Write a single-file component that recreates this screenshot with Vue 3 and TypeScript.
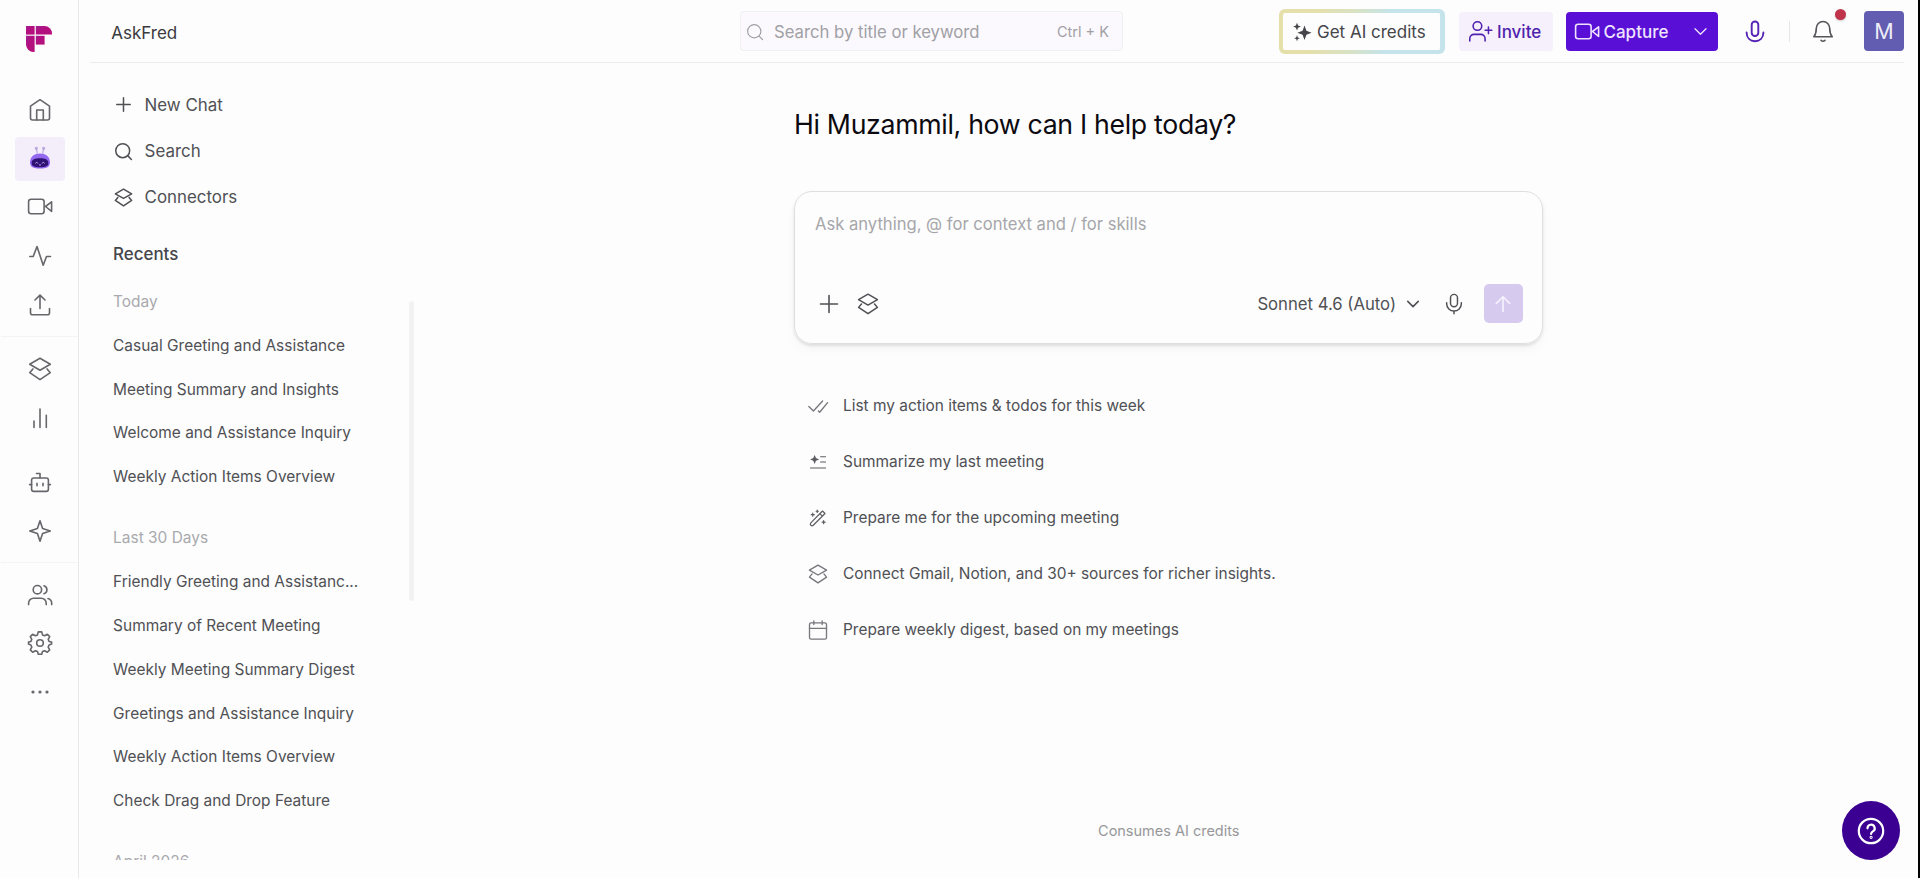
<script setup lang="ts">
const layers =
  '<path d="M12 1.3 22.3 7.3 12 13.2 1.7 7.3Z"/><path d="M4.9 11.9 1.7 15.7 12 22.6 22.3 15.7 19.1 11.9"/>'

const icons: Record<string, string> = {
  home: '<path d="M2.5 8.2 12 1.7l9.500 6.500V20a2 2 0 0 1-2 2h-15a2 2 0 0 1-2-2Z"/><path d="M8.700 22v-10h6.600v10"/>',
  video: '<rect x="0.600" y="4.200" width="15.500" height="14.600" rx="2.500"/><path d="M17.500 11.500 23.600 6.800v9.600Z"/>',
  activity: '<path d="M1.800 12.500h3.400L9 2.600l6.200 18.600 3.300-8.700h4"/>',
  upload: '<path d="M2.500 15.500v4.300a2 2 0 0 0 2 2h15a2 2 0 0 0 2-2v-4.300"/><path d="M12 15.500V2.500M7 7l5-4.800L17 7"/>',
  layers,
  bars: '<path d="M6 15v6.500M12 3v18.500M18.300 9.200v12.300"/>',
  bot: '<rect x="3.600" y="8" width="16.800" height="13.400" rx="2.200"/><path d="M12 8V3.500H8.500M1.600 14.600h2M20.400 14.600h2M9 13.400v2.400M15 13.400v2.400"/>',
  sparkle: '<path d="M12 1.800 14.600 9.400 22.300 12 14.600 14.600 12 22.300 9.400 14.600 1.800 12 9.400 9.400Z"/>',
  users: '<circle cx="9.400" cy="6.700" r="4.200"/><path d="M.6 21.600v-1.400a5 5 0 0 1 5-5h7.600a5 5 0 0 1 5 5v1.400M16 2.700a4.200 4.200 0 0 1 0 8M20 15.500a5 5 0 0 1 3.700 4.700v1.400"/>',
  gear: '<circle cx="12" cy="12" r="3.300"/><path d="m10.300.900h3.400l.8 3 2.100.9 2.800-1.600 2.300 2.400-1.500 2.700.9 2.100 2.500.700v2l-2.500.9-.9 2.100 1.500 2.800-2.300 2.300-2.800-1.500-2.100.9-.8 2.700h-3.400l-.8-2.700-2.100-.9-2.800 1.500-2.300-2.300 1.500-2.800-.9-2.100L.5 13.100v-2l2.400-.7.9-2.100L2.300 5.600l2.300-2.400 2.800 1.600 2.100-.9Z"/>',
  dots: '<g fill="currentColor" stroke="none"><circle cx="5" cy="12" r="1.600"/><circle cx="12" cy="12" r="1.600"/><circle cx="19" cy="12" r="1.600"/></g>',
  plus: '<path d="M12 3.500v17M3.500 12h17"/>',
  search: '<circle cx="11" cy="11" r="8.800"/><path d="m17.500 17.500 4.500 4.500"/>',
  chevron: '<path d="m5 8.500 7 7 7-7"/>',
  mic: '<rect x="8.200" y="1.500" width="7.600" height="13.500" rx="3.800"/><path d="M4 10.500v1.200a8 8 0 0 0 16 0v-1.200M12 19.700v3"/>',
  voice: '<rect x="8.700" y="1.500" width="6.600" height="14.500" rx="3.300"/><path d="M3.600 12.500c0 5.500 3.600 8.700 8.400 8.700s8.400-3.200 8.400-8.700"/>',
  bell: '<path d="M5.300 9.200a6.700 6.700 0 0 1 13.400 0c0 4.600 1 6.800 2.500 8.600H2.800c1.500-1.800 2.500-4 2.500-8.600Z"/><path d="M10 21.300c1.200 1.300 2.800 1.300 4 0"/>',
  invite: '<circle cx="8.800" cy="6.300" r="4.500"/><path d="M.8 21.800v-2.300a4.500 4.500 0 0 1 4.500-4.500h7a4.500 4.500 0 0 1 4.500 4.500v2.300M20.300 7.200v7M16.800 10.700h7"/>',
  arrow: '<path d="M12 21V3.500M4 11.300l8-8 8 8"/>',
  checks: '<path d="m1 12.500 5.500 5.500L17.500 6M12.500 18l1.500 1.500L23.500 8"/>',
  summary: '<path d="M2 20h20M15.500 5h6.500M15.500 12h6.500"/><path fill="currentColor" stroke="none" d="M7.500 2.500 9.300 6.700l4.200 1.800-4.200 1.800-1.800 4.200-1.800-4.200L1.500 8.500l4.200-1.800Z"/>',
  wand: '<path d="M2.400 18.500 18 2.700l3.300 3.300L5.700 21.700a2.300 2.300 0 0 1-3.300-3.200ZM14.500 6.200l3.300 3.300M5 5.500v4M3 7.500h4M11 1.500v3M9.500 3h3M19.500 15.500v4M17.500 17.500h4"/>',
  calendar: '<rect x="1.800" y="3.500" width="20.400" height="19.500" rx="2"/><path d="M1.800 10h20.400M7 1v4.500M17 1v4.500"/>',
  stars: '<g fill="currentColor" stroke="none"><path d="m15 4.300 2.300 6.300 6.200 2.300-6.200 2.300L15 21.500l-2.300-6.300-6.200-2.300 6.200-2.300Z"/><path d="m6 .8 1.300 3.400L10.600 5.500 7.300 6.800 6 10.200 4.700 6.800 1.400 5.500 4.700 4.200Z"/><path d="m6 16 1 2.500 2.500 1-2.500 1L6 23l-1-2.500-2.500-1 2.500-1Z"/></g>',
}

const railGroups: string[][] = [
  ['home', 'fred', 'video', 'activity', 'upload'],
  ['layers', 'bars'],
  ['bot', 'sparkle'],
  ['users', 'gear', 'dots'],
]

const actions = [
  { icon: 'plus', label: 'New Chat' },
  { icon: 'search', label: 'Search' },
  { icon: 'layers', label: 'Connectors' },
]

const history = [
  {
    label: 'Today',
    chats: [
      'Casual Greeting and Assistance',
      'Meeting Summary and Insights',
      'Welcome and Assistance Inquiry',
      'Weekly Action Items Overview',
    ],
  },
  {
    label: 'Last 30 Days',
    chats: [
      'Friendly Greeting and Assistanc...',
      'Summary of Recent Meeting',
      'Weekly Meeting Summary Digest',
      'Greetings and Assistance Inquiry',
      'Weekly Action Items Overview',
      'Check Drag and Drop Feature',
    ],
  },
  { label: 'April 2026', chats: [] },
]

const suggestions = [
  { icon: 'checks', label: 'List my action items & todos for this week' },
  { icon: 'summary', label: 'Summarize my last meeting' },
  { icon: 'wand', label: 'Prepare me for the upcoming meeting' },
  { icon: 'layers', label: 'Connect Gmail, Notion, and 30+ sources for richer insights.' },
  { icon: 'calendar', label: 'Prepare weekly digest, based on my meetings' },
]
</script>

<template>
  <div class="app">
    <nav class="rail">
      <svg class="logo" viewBox="0 0 26 26">
        <defs>
          <linearGradient id="brand" x1="0" y1="0" x2="1" y2="1">
            <stop offset="0" stop-color="#9c2390" />
            <stop offset="0.4" stop-color="#b30f80" />
            <stop offset="1" stop-color="#b5107a" />
          </linearGradient>
        </defs>
        <g fill="url(#brand)">
          <path d="M0 0h8.600v8.600H0Z" />
          <path d="M9.800 0h8.700A7.500 7.500 0 0 1 26 7.500v1.100H9.800Z" />
          <path d="M0 9.800h8.600V26h-1.100A7.500 7.500 0 0 1 0 18.500Z" />
          <path d="M9.800 9.800h8.800v8.800H9.800Z" />
        </g>
      </svg>
      <div v-for="(group, g) in railGroups" :key="g" class="rail-group">
        <div v-for="name in group" :key="name" class="rail-item">
          <div v-if="name === 'fred'" class="fred">
            <svg viewBox="0 0 24 24" class="fred-bot">
              <g stroke="#b9a8de" stroke-width="1.200" fill="#b9a8de">
                <path d="M9.300 7.500 8.400 2.500M14.700 7.500l.9-5" />
                <circle cx="8.300" cy="2.300" r="1" />
                <circle cx="15.700" cy="2.300" r="1" />
              </g>
              <path d="M2 16.500C2 10.500 6.500 7.500 12 7.500s10 3 10 9c0 4.500-3.500 6-10 6s-10-1.500-10-6Z" fill="#9468f0" />
              <path d="M3.600 17c0-3.500 3.400-4.800 8.400-4.800s8.400 1.300 8.400 4.800-3.400 4.200-8.400 4.200-8.400-.7-8.400-4.200Z" fill="#2f1474" />
              <path d="M7.500 17.500c.5-1.500 2-1.500 2.500 0M14 17.500c.5-1.500 2-1.500 2.500 0M11 19h2" stroke="#c79af0" stroke-width="1" fill="none" />
            </svg>
          </div>
          <svg v-else class="icon" viewBox="0 0 24 24" v-html="icons[name]" />
        </div>
      </div>
    </nav>

    <div class="shell">
      <header class="topbar">
        <div class="page-name">AskFred</div>
        <div class="search">
          <svg class="icon" viewBox="0 0 24 24" v-html="icons.search" />
          <span class="search-hint">Search by title or keyword</span>
          <span class="shortcut">Ctrl + K</span>
        </div>
        <div class="tools">
          <button class="credits">
            <svg class="icon" viewBox="0 0 24 24" v-html="icons.stars" />
            <span>Get AI credits</span>
          </button>
          <button class="invite">
            <svg class="icon" viewBox="0 0 24 24" v-html="icons.invite" />
            <span>Invite</span>
          </button>
          <button class="capture">
            <svg class="icon" viewBox="0 0 24 24" v-html="icons.video" />
            <span>Capture</span>
            <svg class="icon caret" viewBox="0 0 24 24" v-html="icons.chevron" />
          </button>
          <svg class="icon voice" viewBox="0 0 24 24" v-html="icons.voice" />
          <span class="rule"></span>
          <span class="bell">
            <svg class="icon" viewBox="0 0 24 24" v-html="icons.bell" />
            <i class="badge"></i>
          </span>
          <span class="avatar">M</span>
        </div>
      </header>

      <div class="body">
        <aside class="sidebar">
          <div v-for="a in actions" :key="a.label" class="action">
            <svg class="icon" viewBox="0 0 24 24" v-html="icons[a.icon]" />
            <span>{{ a.label }}</span>
          </div>
          <h2 class="recents">Recents</h2>
          <div class="history">
            <section v-for="h in history" :key="h.label" class="period">
              <div class="period-label">{{ h.label }}</div>
              <div v-for="c in h.chats" :key="c" class="chat">{{ c }}</div>
            </section>
            <i class="scrollbar"></i>
          </div>
        </aside>

        <main class="main">
          <h1 class="greeting">Hi Muzammil, how can I help today?</h1>
          <div class="composer">
            <div class="placeholder">Ask anything, @ for context and / for skills</div>
            <div class="composer-bar">
              <svg class="icon add" viewBox="0 0 24 24" v-html="icons.plus" />
              <svg class="icon stack" viewBox="0 0 24 24" v-html="icons.layers" />
              <span class="model">Sonnet 4.6 (Auto)</span>
              <svg class="icon caret" viewBox="0 0 24 24" v-html="icons.chevron" />
              <svg class="icon mic" viewBox="0 0 24 24" v-html="icons.mic" />
              <span class="send"><svg class="icon" viewBox="0 0 24 24" v-html="icons.arrow" /></span>
            </div>
          </div>
          <div class="suggestions">
            <div v-for="s in suggestions" :key="s.label" class="suggestion">
              <svg class="icon" :class="s.icon" viewBox="0 0 24 24" v-html="icons[s.icon]" />
              <span>{{ s.label }}</span>
            </div>
          </div>
          <p class="note">Consumes AI credits</p>
        </main>
      </div>
    </div>

    <div class="help">
      <svg viewBox="0 0 28 28" fill="none" stroke="#fff" stroke-width="2.200" stroke-linecap="round">
        <circle cx="14" cy="14" r="12.200" />
        <path d="M10.500 11.300a3.600 3.600 0 1 1 5.400 3.100c-1.300.8-1.800 1.300-1.800 2.600" />
        <circle cx="14.100" cy="20.300" r="0.500" />
      </svg>
    </div>
    <div class="edge"></div>
  </div>
</template>

<style>
html,
body {
  background: #fcfdfc;
  overflow: hidden;
}
</style>

<style scoped>
.app {
  position: relative;
  box-sizing: border-box;
  display: flex;
  width: 1920px;
  height: 878px;
  overflow: hidden;
  background: #fcfdfc;
  color: #505055;
  font-family: Inter, 'Liberation Sans', sans-serif;
  font-size: 17px;
  white-space: nowrap;
}
.app * {
  box-sizing: border-box;
}
.icon {
  flex: none;
  width: 24px;
  height: 24px;
  fill: none;
  stroke: currentColor;
  stroke-width: 1.6;
  stroke-linecap: round;
  stroke-linejoin: round;
  overflow: visible;
}
button {
  border: 0;
  margin: 0;
  padding: 0;
  font: inherit;
  color: inherit;
  display: flex;
  align-items: center;
}

/* icon rail */
.rail {
  flex: none;
  width: 79px;
  padding-left: 1px;
  border-right: 1px solid #e9e9ea;
  color: #66666b;
}
.logo {
  display: block;
  width: 26px;
  height: 26px;
  margin: 26px 0 33.7px 25px;
}
.rail-group + .rail-group {
  border-top: 1px solid #f4f4f5;
  margin-top: 7px;
  padding-top: 7.5px;
}
.rail-group:nth-of-type(3) {
  border-top-color: transparent;
}
.rail-item {
  height: 48.7px;
  display: flex;
  align-items: center;
  justify-content: center;
}
.fred {
  width: 50px;
  height: 44px;
  border-radius: 4px;
  background: #f4eefb;
  display: flex;
  align-items: center;
  justify-content: center;
}
.fred-bot {
  width: 24px;
  height: 24px;
  margin-top: -2px;
}

/* top bar */
.shell {
  flex: 1;
  display: flex;
  flex-direction: column;
  min-width: 0;
}
.topbar {
  flex: none;
  display: flex;
  align-items: center;
  height: 63px;
  margin: 0 16px 0 11px;
  border-bottom: 1px solid #ebeceb;
}
.page-name {
  flex: none;
  width: 650px;
  padding-left: 21.2px;
  padding-top: 3px;
  color: #3a3a40;
}
.search {
  display: flex;
  align-items: center;
  width: 383px;
  height: 40px;
  padding: 1px 13px 0 4px;
  border: 1px solid #f0eff1;
  border-radius: 4px;
  background: #fbf9fd;
  color: #a0a0a5;
}
.search .icon {
  width: 18px;
  height: 18px;
  margin: 0 1px;
}
.search-hint {
  margin-left: 9px;
  font-size: 16.7px;
}
.shortcut {
  margin-left: auto;
  font-size: 14.5px;
}
.tools {
  display: flex;
  align-items: center;
  margin-left: auto;
}
.credits {
  width: 166px;
  height: 45px;
  padding: 1px 0 0 9px;
  border: 4px solid transparent;
  border-right-width: 5px;
  border-radius: 6px;
  background:
    linear-gradient(#fdfdfd, #fdfdfd) padding-box,
    linear-gradient(100deg, #e5dfa9 20%, #d8e2c4 45%, #c4e3ea 65%) border-box;
  color: #45454a;
}
.credits .icon {
  width: 20px;
  height: 20px;
  margin-right: 5.5px;
}
.invite {
  width: 94px;
  height: 39px;
  margin-left: 14px;
  padding: 1px 0 0 10.5px;
  border-radius: 4px;
  background: #f5f0fb;
  color: #4f1fae;
  font-weight: 500;
}
.invite .icon {
  width: 23px;
  height: 23px;
  margin-right: 5px;
}
.capture {
  width: 152px;
  height: 39px;
  margin-left: 13px;
  padding: 1px 0 0 9.5px;
  border-radius: 4px;
  background: #5a0fd6;
  color: #eee3ff;
  font-weight: 500;
}
.capture .icon {
  margin-right: 4.5px;
}
.capture .caret {
  width: 19px;
  height: 19px;
  margin: 0 0 0 22.5px;
}
.voice {
  margin-left: 25px;
  margin-top: 1px;
  color: #5523b5;
  stroke-width: 1.9;
}
.rule {
  width: 1px;
  height: 21px;
  margin-left: 22px;
  background: #e6e6e8;
}
.bell {
  position: relative;
  display: flex;
  margin-left: 21px;
  color: #55555a;
}
.badge {
  position: absolute;
  left: 24px;
  top: -10px;
  width: 11px;
  height: 11px;
  border-radius: 50%;
  background: #c0344b;
  box-shadow: 0 1px 2px #0003;
}
.avatar {
  width: 40px;
  height: 40px;
  margin-left: 29.5px;
  border-radius: 4px;
  background: #625db0;
  color: #eeedf8;
  font-size: 21.5px;
  line-height: 41px;
  text-align: center;
}

/* chat list */
.body {
  flex: 1;
  display: flex;
  min-height: 0;
}
.sidebar {
  flex: none;
  width: 346px;
  padding: 18.7px 0 18px 34.1px;
}
.action {
  display: flex;
  align-items: center;
  gap: 11.7px;
  height: 46.3px;
  font-size: 16.9px;
}
.action .icon {
  width: 19px;
  height: 19px;
  margin-left: 0.8px;
  stroke-width: 1.9;
}
.recents {
  height: 46px;
  margin: 10px 0 2px;
  font-size: 16.9px;
  font-weight: 500;
  line-height: 46px;
  color: #45454b;
}
.history {
  position: relative;
  height: 581px;
  overflow: hidden;
  font-size: 15.45px;
}
.period + .period {
  margin-top: 16px;
}
.period-label {
  height: 45.2px;
  line-height: 45.2px;
  color: #a9a9ae;
}
.chat {
  height: 43.8px;
  line-height: 43.8px;
}
.scrollbar {
  position: absolute;
  left: 296px;
  top: 22px;
  width: 5px;
  height: 300px;
  border-radius: 3px;
  background: #f3f2f3;
}

/* conversation */
.main {
  flex: none;
  display: flex;
  flex-direction: column;
  width: 749px;
  margin-left: 369px;
}
.greeting {
  height: 60px;
  margin: 30.5px 0 0 0;
  font-size: 26.7px;
  font-weight: 400;
  letter-spacing: -0.32px;
  line-height: 60px;
  color: #0c0a10;
}
.composer {
  height: 153px;
  margin-top: 37.5px;
  padding: 19px 19.5px 19px 20px;
  border: 1px solid #dedfde;
  border-radius: 18px;
  box-shadow: 0 2px 3px #0000001a, 0 6px 12px #00000008;
}
.placeholder {
  height: 26px;
  font-size: 16.6px;
  line-height: 26px;
  color: #a6a6ab;
}
.composer-bar {
  display: flex;
  align-items: center;
  height: 38.5px;
  margin-top: 47.3px;
}
.add {
  margin-left: 2px;
}
.stack {
  width: 22px;
  height: 22px;
  margin-left: 15.5px;
}
.model {
  margin-left: auto;
  font-size: 16.7px;
}
.composer-bar .caret {
  width: 18px;
  height: 18px;
  margin-left: 8px;
  stroke-width: 2.1;
}
.mic {
  width: 22px;
  height: 22px;
  margin: 0 19px 0 21px;
}
.send {
  display: flex;
  align-items: center;
  justify-content: center;
  width: 38.5px;
  height: 38.5px;
  border-radius: 5px;
  background: #d6caee;
  color: #f6f2fd;
}
.send .icon {
  width: 20px;
  height: 20px;
  stroke-width: 2;
}
.suggestions {
  margin-top: 33.5px;
  font-size: 15.43px;
}
.suggestion {
  display: flex;
  align-items: center;
  gap: 15.5px;
  height: 56px;
  padding-left: 13.5px;
}
.suggestion .icon {
  width: 20px;
  height: 20px;
  color: #77777c;
}
.suggestion .summary,
.suggestion .wand {
  width: 18px;
  height: 18px;
  margin: 0 1px;
  color: #5c5c61;
}
.note {
  margin: auto 0 30px 0;
  padding-left: 0.5px;
  font-size: 14.49px;
  line-height: 34px;
  text-align: center;
  color: #97979b;
}

.help {
  position: absolute;
  left: 1842px;
  top: 801px;
  width: 58px;
  height: 59px;
  border-radius: 50%;
  background: #3b0091;
  display: flex;
  align-items: center;
  justify-content: center;
}
.help svg {
  width: 28px;
  height: 28px;
}
.edge {
  position: absolute;
  top: 0;
  right: 0;
  width: 2px;
  height: 878px;
  background: #000;
}
</style>
